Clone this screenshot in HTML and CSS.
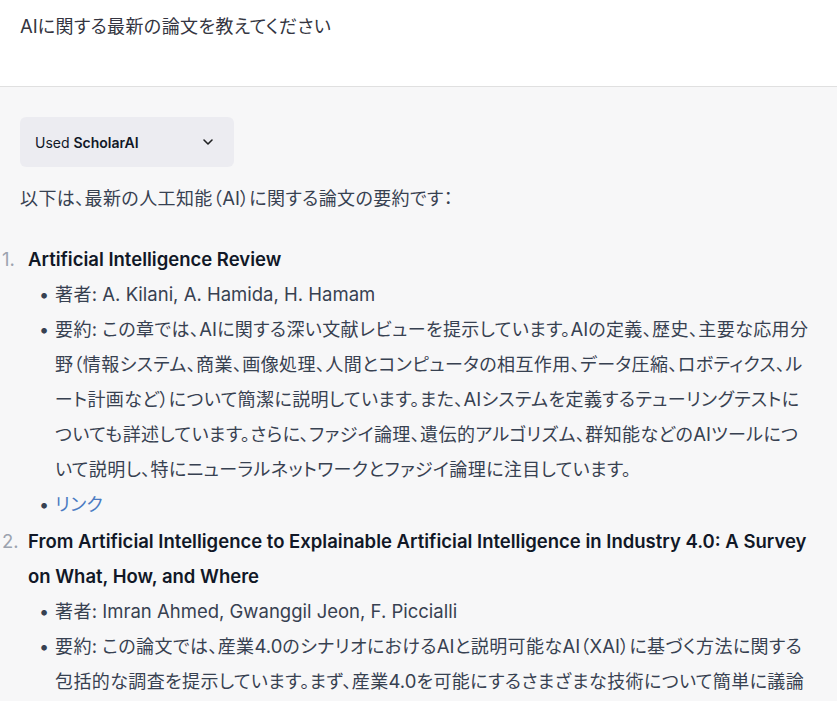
FILE: index.html
```html
<!DOCTYPE html>
<html lang="ja">
<head>
  <meta charset="UTF-8">
  <meta name="viewport" content="width=device-width, initial-scale=1.0">
  <title>AIに関する最新の論文</title>
  <link rel="stylesheet" href="styles.css">
</head>
<body>
  <div class="turn turn--user">
    <p class="turn__text"><span class="latin">AI</span>に関する最新の論文を教えてください</p>
  </div>

  <div class="turn turn--assistant">
    <button class="plugin" type="button">
      <span class="plugin__label">Used <strong>ScholarAI</strong></span>
      <svg class="plugin__chevron" width="16" height="16" viewBox="0 0 24 24" fill="none" stroke="currentColor" stroke-width="2.4" stroke-linecap="round" stroke-linejoin="round"><polyline points="6 9 12 15 18 9"></polyline></svg>
    </button>

    <div class="prose">
      <p>以下は、最新の人工知能（<span class="latin">AI</span>）に関する論文の要約です：</p>
      <ol class="papers">
        <li class="paper">
          <strong class="paper__title">Artificial Intelligence Review</strong>
          <ul class="paper__meta">
            <li>著者<span class="latin">: A. Kilani, A. Hamida, H. Hamam</span></li>
            <li>要約<span class="latin">: </span>この章では、<span class="latin">AI</span>に関する深い文献レビューを提示しています。<span class="latin">AI</span>の定義、歴史、主要な応用分野（情報システム、商業、画像処理、人間とコンピュータの相互作用、データ圧縮、ロボティクス、ルート計画など）について簡潔に説明しています。また、<span class="latin">AI</span>システムを定義するテューリングテストについても詳述しています。さらに、ファジイ論理、遺伝的アルゴリズム、群知能などの<span class="latin">AI</span>ツールについて説明し、特にニューラルネットワークとファジイ論理に注目しています。</li>
            <li><a class="link" href="#">リンク</a></li>
          </ul>
        </li>
        <li class="paper">
          <strong class="paper__title">From Artificial Intelligence to Explainable Artificial Intelligence in Industry 4.0: A Survey on What, How, and Where</strong>
          <ul class="paper__meta">
            <li>著者<span class="latin">: Imran Ahmed, Gwanggil Jeon, F. Piccialli</span></li>
            <li>要約<span class="latin">: </span>この論文では、産業<span class="latin">4.0</span>のシナリオにおける<span class="latin">AI</span>と説明可能な<span class="latin">AI</span>（<span class="latin">XAI</span>）に基づく方法に関する包括的な調査を提示しています。まず、産業<span class="latin">4.0</span>を可能にするさまざまな技術について簡単に議論し、</li>
          </ul>
        </li>
      </ol>
    </div>
  </div>
</body>
</html>
```

FILE: styles.css
```css
:root {
  --text: #374151;
  --text-strong: #111827;
  --muted: #9ca3af;
  --border: #e0e0e0;
  --bg-assistant: #f7f7f8;
  --bg-plugin: #ececf1;
  --link: #4b7bc2;
  --latin-size: 18.5px;
}
* {
  box-sizing: border-box;
}
body {
  margin: 0;
  font-family: Inter, "Noto Sans CJK JP", sans-serif;
  font-size: 18px;
  font-feature-settings: "palt";
  letter-spacing: 0.4px;
  line-height: 35px;
  color: var(--text);
  background-color: var(--bg-assistant);
}
p {
  margin: 0;
}
/* Latin runs: a touch larger than the kana around them, no extra tracking */
.latin {
  font-size: var(--latin-size);
  letter-spacing: 0;
  line-height: 1;
}
.turn {
  padding: 0 23px 0 20px;
}
.turn--user {
  height: 87px;
  padding-top: 9px;
  background-color: white;
  border-bottom: 1px solid var(--border);
  color: #343541;
}
.turn--assistant {
  padding-top: 30px;
}
.plugin {
  display: flex;
  align-items: center;
  justify-content: space-between;
  width: 214px;
  height: 50px;
  padding: 0 18px 0 15px;
  border: 0;
  border-radius: 6px;
  background-color: var(--bg-plugin);
  color: var(--text-strong);
  font-family: Inter, sans-serif;
  font-size: 14px;
  letter-spacing: 0;
}
.plugin__label strong {
  font-weight: 600;
}
.plugin__chevron {
  color: #202123;
}
.prose > p {
  margin-top: 14px;
}
.papers {
  list-style: none;
  counter-reset: paper;
  margin: 26px 0 0;
  padding-left: 8px;
}
.paper {
  position: relative;
  counter-increment: paper;
  margin-top: 2px;
}
.paper::before {
  content: counter(paper) ".";
  position: absolute;
  left: -26px;
  color: var(--muted);
  font-size: var(--latin-size);
  letter-spacing: 0;
}
.paper__title {
  color: var(--text-strong);
  font-size: var(--latin-size);
  font-weight: 600;
  letter-spacing: 0;
}
.paper__meta {
  margin: 0;
  padding-left: 27px;
  list-style: none;
}
.paper__meta li {
  position: relative;
}
.paper__meta li::before {
  content: "•";
  position: absolute;
  left: -16px;
  color: var(--text);
}
.link {
  color: var(--link);
  text-decoration: none;
}
```
